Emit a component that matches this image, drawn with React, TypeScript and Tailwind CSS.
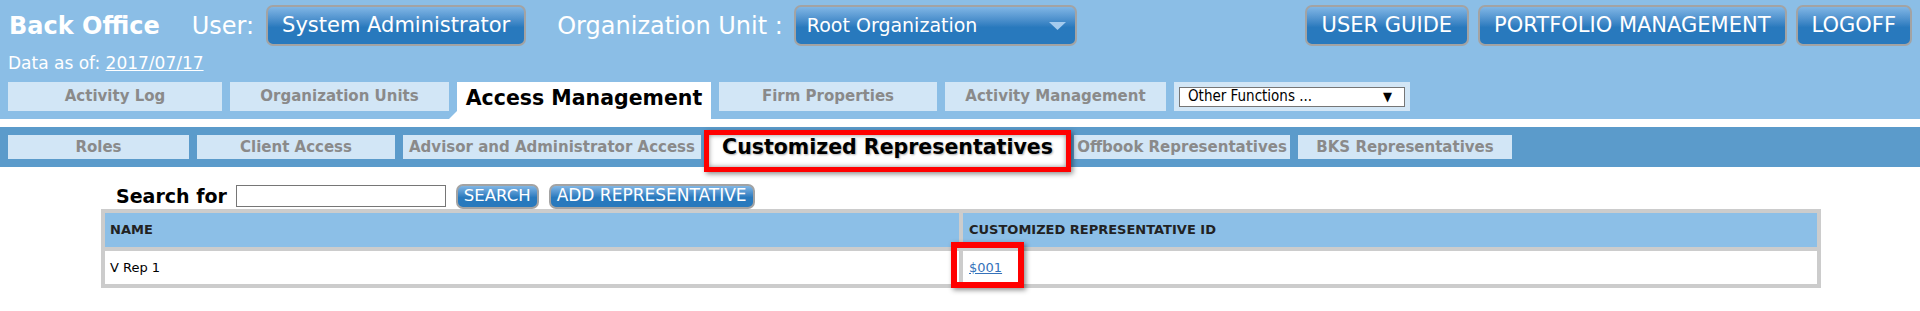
import React from 'react';

const btn =
  'flex items-center rounded-[7px] border-2 border-[#a3a3a3] bg-linear-to-b from-[#80b6e5] to-[#2879bd] to-55% text-white';

const TopTab = ({ label, w }: { label: string; w: string }) => (
  <div className={`${w} h-[29px] bg-[#d2e6f6] flex items-center justify-center text-[15px] font-bold text-[#8a8a8a]`}>
    {label}
  </div>
);

const SubTab = ({ label, w }: { label: string; w: string }) => (
  <div className={`${w} h-[24px] bg-[#d2e6f6] flex items-center justify-center text-[15px] font-bold text-[#8a8a8a]`}>
    {label}
  </div>
);

const App = () => {
  return (
    <div className="w-[1920px] h-[311px] bg-white overflow-hidden font-['DejaVu_Sans',Verdana,sans-serif]">
      {/* header */}
      <div className="bg-[#8bbee6] pt-[5px] pb-[8px]">
        <div className="h-[41px] flex items-center pl-[9px] pr-[8px]">
          <span className="text-[24px] font-bold text-white">Back Office</span>
          <span className="ml-[32px] text-[24px] text-white">User:</span>
          <div className={`${btn} h-[41px] ml-[12px] px-[14px] text-[21px]`}>System Administrator</div>
          <span className="ml-[31px] text-[24px] text-white">Organization Unit :</span>
          <div className={`${btn} h-[41px] ml-[11px] w-[283px] pl-[11px] pr-[8px] text-[19px] justify-between`}>
            <span>Root Organization</span>
            <svg width="17" height="8" viewBox="0 0 17 8" className="mr-[1px]">
              <polygon points="0,0 17,0 8.5,8" fill="#a4cbee" />
            </svg>
          </div>
          <div className="ml-auto flex gap-[9px]">
            <div className={`${btn} h-[41px] px-[15px] text-[21px]`}>USER GUIDE</div>
            <div className={`${btn} h-[41px] px-[14px] text-[21px]`}>PORTFOLIO MANAGEMENT</div>
            <div className={`${btn} h-[41px] px-[14px] text-[21px]`}>LOGOFF</div>
          </div>
        </div>

        <div className="mt-[7px] pl-[8px] text-[17px] leading-[20px] text-white">
          Data as of: <span className="underline">2017/07/17</span>
        </div>

        <div className="mt-[9px] h-[29px] pl-[8px] flex items-start gap-[8px]">
          <TopTab label="Activity Log" w="w-[214px]" />
          <TopTab label="Organization Units" w="w-[219px]" />
          <div className="relative z-10 w-[254px] h-[45px] bg-white">
            <div className="h-[32px] flex items-center justify-center text-[20.5px] font-bold text-black">
              Access Management
            </div>
            <svg width="8" height="8" viewBox="0 0 8 8" className="absolute left-[-8px] top-[29px]">
              <polygon points="8,0 8,8 0,8" fill="#ffffff" />
            </svg>
          </div>
          <TopTab label="Firm Properties" w="w-[218px]" />
          <TopTab label="Activity Management" w="w-[221px]" />
          <div className="w-[236px] h-[29px] bg-[#d2e6f6] flex items-center px-[5px]">
            <div className="w-full h-[20px] bg-white border border-[#767676] flex items-center justify-between pl-[8px] pr-[12px] font-['DejaVu_Sans_Condensed',sans-serif] text-[15px] text-black">
              <span>Other Functions ...</span>
              <span className="text-[13px]">▼</span>
            </div>
          </div>
        </div>
      </div>

      <div className="h-[8px] bg-white" />

      {/* sub navigation */}
      <div className="h-[40px] bg-[#5b9bcb] pt-[8px] pl-[8px] flex items-start gap-[8px]">
        <SubTab label="Roles" w="w-[181px]" />
        <SubTab label="Client Access" w="w-[198px]" />
        <SubTab label="Advisor and Administrator Access" w="w-[298px]" />
        <div className="relative z-10 w-[357px] h-[32px] bg-white shadow-[inset_0_0_5px_rgba(0,0,0,0.45)]">
          <div className="h-[25px] flex items-center justify-center text-[20.5px] font-bold text-black [text-shadow:1px_1px_2px_rgba(0,0,0,0.3)]">
            Customized Representatives
          </div>
          <div className="absolute -inset-[5px] border-[5px] border-[#ff0000] shadow-[2px_2px_5px_rgba(0,0,0,0.45)]" />
        </div>
        <SubTab label="Offbook Representatives" w="w-[216px]" />
        <SubTab label="BKS Representatives" w="w-[214px]" />
      </div>

      {/* content */}
      <div className="ml-[101px] mt-[16px] w-[1720px]">
        <div className="h-[26px] pl-[15px] flex items-center">
          <span className="text-[19px] font-bold text-black">Search for</span>
          <input
            type="text"
            className="ml-[9px] w-[210px] h-[22px] border border-[#767676] bg-white outline-none"
          />
          <div className={`${btn} h-[25px] ml-[10px] px-[6px] text-[16.5px] rounded-[6px]`}>SEARCH</div>
          <div className={`${btn} h-[25px] ml-[10px] px-[6px] text-[17px] rounded-[6px]`}>ADD REPRESENTATIVE</div>
        </div>

        <div className="grid grid-cols-2 gap-[4px] p-[4px] bg-[#cccccc] text-[13px] text-[#222222]">
          <div className="h-[34px] bg-[#8cbfe7] flex items-center pl-[5px] font-bold">NAME</div>
          <div className="h-[34px] bg-[#8cbfe7] flex items-center pl-[6px] font-bold">
            CUSTOMIZED REPRESENTATIVE ID
          </div>
          <div className="h-[33px] bg-white flex items-center pl-[5px] text-black">V Rep 1</div>
          <div className="relative h-[33px] bg-white flex items-center pl-[6px]">
            <a href="#" className="text-[#3572ba] underline">
              $001
            </a>
            <div className="absolute left-[-12px] top-[-9px] w-[73px] h-[46px] border-[6px] border-[#ff0000] shadow-[2px_2px_5px_rgba(0,0,0,0.45)]" />
          </div>
        </div>
      </div>
    </div>
  );
};

export default App;
